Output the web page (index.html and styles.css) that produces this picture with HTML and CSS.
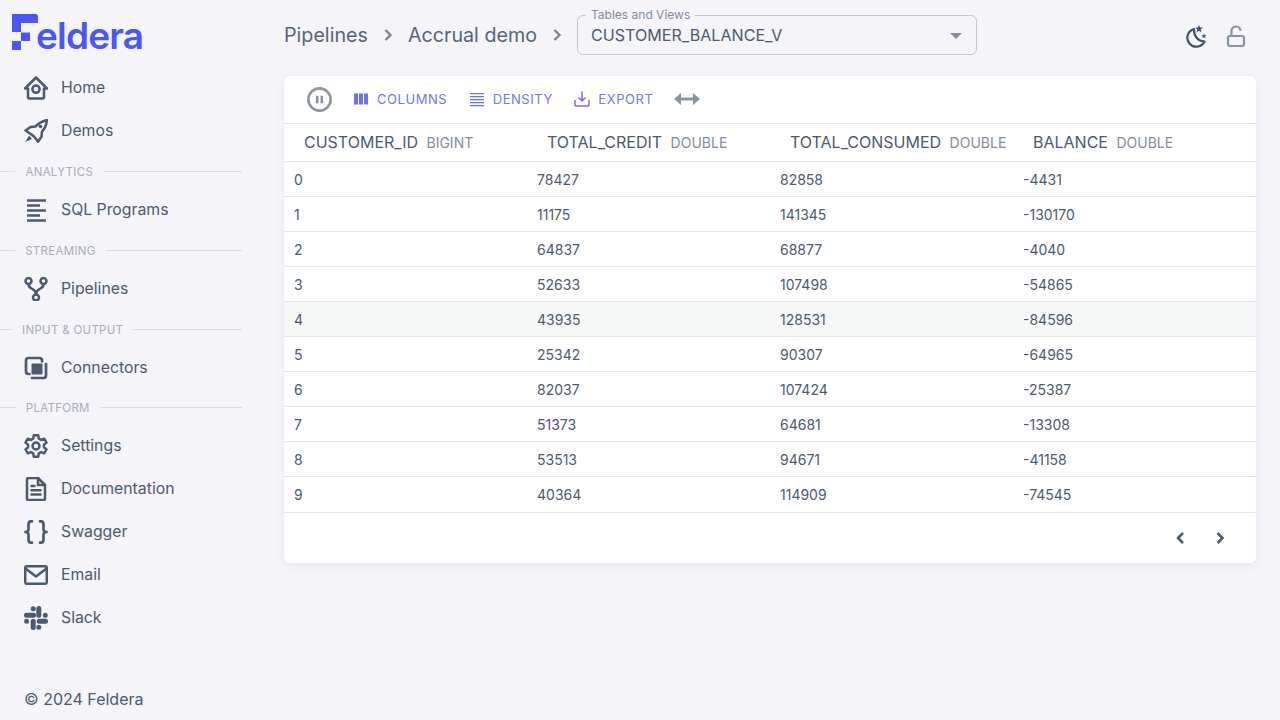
FILE: index.html
```html
<!DOCTYPE html>
<html lang="en">
<head>
  <meta charset="UTF-8" />
  <meta name="viewport" content="width=device-width, initial-scale=1.0" />
  <title>Feldera - Accrual demo</title>
  <link rel="stylesheet" href="styles.css">
</head>
<body>
  <!-- ========================== SIDEBAR ========================= -->
  <aside class="sidebar">
    <div class="logo">
      <svg class="logo-mark" width="26" height="36" viewBox="0 0 26 36"><path d="M0 0H23.500Q26 0 26 2.500V9H9V18H0ZM9 18.500H18V27H9ZM0 27H9V36H0Z" fill="#4a55fb"/></svg>
      <span class="logo-text">eldera</span>
    </div>
    <nav class="nav">
      <a class="nav-item">
        <svg class="nav-icon" viewBox="0 0 24 24"><path d="M1 12.500 12 1.500l11 11h-3v8.500a1.500 1.500 0 0 1-1.500 1.500h-13A1.500 1.500 0 0 1 4 21v-8.500Z"/><circle cx="12" cy="13.200" r="3.600"/></svg>
        Home
      </a>
      <a class="nav-item">
        <svg class="nav-icon" viewBox="0 0 24 24"><path d="M7.500 15.500 1.500 11.500l5-3.500 5-.5C15 4 18.500 2 23 1c-.5 4.500-2 8.500-5 11.700l-.5 5-3.500 5-3.800-5Z"/><circle cx="16.500" cy="7.500" r="1.800" class="fill"/><path d="M5 16.500 1.200 23l6.800-3Z" class="fill"/></svg>
        Demos
      </a>
      <div class="nav-section"><span>ANALYTICS</span></div>
      <a class="nav-item">
        <svg class="nav-icon" viewBox="0 0 24 24"><path class="wide" d="M3 2.500h19M3 7.500h13M3 12.500h19M3 17.500h13M3 22.500h19"/></svg>
        SQL Programs
      </a>
      <div class="nav-section"><span>STREAMING</span></div>
      <a class="nav-item">
        <svg class="nav-icon" viewBox="0 0 24 24"><circle cx="4.500" cy="4" r="3"/><circle cx="19.500" cy="4" r="3"/><circle cx="12" cy="20.500" r="3"/><path d="M4.500 7.500c0 5 7.500 3.500 7.500 9.500M19.500 7.500c0 5-7.500 3.500-7.500 9.500"/></svg>
        Pipelines
      </a>
      <div class="nav-section"><span>INPUT &amp; OUTPUT</span></div>
      <a class="nav-item">
        <svg class="nav-icon" viewBox="0 0 24 24"><path class="thick" d="M5.500 18H4.500A2.500 2.500 0 0 1 2 15.500v-11A2.500 2.500 0 0 1 4.500 2h11A2.500 2.500 0 0 1 18 4.500v1"/><path class="thick" d="M22 8v11.500a2.500 2.500 0 0 1-2.500 2.500H8"/><rect x="7.500" y="7.500" width="11" height="11" rx="1" class="fill"/></svg>
        Connectors
      </a>
      <div class="nav-section nav-section-last"><span>PLATFORM</span></div>
      <a class="nav-item">
        <svg class="nav-icon" viewBox="0 0 24 24"><path d="M9.800 1.300h4.400l.6 3.400 2.200 1.200 3.200-1.200 2.300 3.900-2.600 2.200v2.400l2.600 2.200-2.300 3.900-3.200-1.200-2.200 1.200-.6 3.400H9.800l-.6-3.400L7 18.100l-3.200 1.200-2.300-3.900 2.600-2.200v-2.400L1.500 8.600l2.300-3.900L7 5.900l2.200-1.200Z"/><circle cx="12" cy="12" r="3.500"/></svg>
        Settings
      </a>
      <a class="nav-item">
        <svg class="nav-icon" viewBox="0 0 24 24"><path d="M14 1H4.500A1.500 1.500 0 0 0 3 2.500v19A1.500 1.500 0 0 0 4.500 23h15a1.500 1.500 0 0 0 1.500-1.500V8Z"/><path d="M14 1v7h7M7.500 9h3M7.500 13.200h9M7.500 17.500h9"/></svg>
        Documentation
      </a>
      <a class="nav-item">
        <svg class="nav-icon" viewBox="0 0 24 24"><path class="thick" d="M8 1.300H7C5 1.300 4.500 3 4.500 4.500v4.500c0 2-1 3-3 3 2 0 3 1 3 3v4.500c0 1.500.5 3.200 2.500 3.200h1M16 1.300h1c2 0 2.500 1.700 2.500 3.200v4.500c0 2 1 3 3 3-2 0-3 1-3 3v4.500c0 1.500-.5 3.200-2.500 3.200h-1"/></svg>
        Swagger
      </a>
      <a class="nav-item">
        <svg class="nav-icon" viewBox="0 0 24 24"><rect x="1.200" y="3.200" width="21.600" height="17.600" rx="1.800"/><path d="m1.500 5.500 10.500 8 10.500-8"/></svg>
        Email
      </a>
      <a class="nav-item">
        <svg class="nav-icon" viewBox="0 0 24 24">
          <path class="slack" d="M2.500 9.200h7M14.800 2.500v6.700M15.200 15.200h6.300M9.200 15.200v6.300M21.300 9.200h.01M2.600 15.200h.01M9.200 2.700h.01M14.800 21.300h.01"/>
        </svg>
        Slack
      </a>
    </nav>
    <div class="copyright">© 2024 Feldera</div>
  </aside>

  <!-- ========================== MAIN ========================= -->
  <main class="main">
    <header class="topbar">
      <span class="crumb">Pipelines</span>
      <svg class="crumb-sep" viewBox="0 0 24 24"><path d="m9.500 7 5 5-5 5"/></svg>
      <span class="crumb">Accrual demo</span>
      <svg class="crumb-sep" viewBox="0 0 24 24"><path d="m9.500 7 5 5-5 5"/></svg>
      <div class="select">
        <span class="select-label">Tables and Views</span>
        <span class="select-value">CUSTOMER_BALANCE_V</span>
        <span class="select-caret"></span>
      </div>
      <div class="top-actions">
        <svg class="moon" viewBox="0 0 24 24"><path d="M10 5a9 9 0 1 0 10.500 12.500C14.500 17.500 9.500 12.500 10 5Z"/><path class="fill" d="m15 .5 1 2.900 3 .2-2.300 1.900.8 2.900-2.500-1.600-2.500 1.600.8-2.900-2.300-1.900 3-.2ZM20 9.500l.7 1.700 1.800.1-1.400 1.200.5 1.800-1.600-1-1.600 1 .5-1.800-1.400-1.200 1.800-.1Z"/></svg>
        <svg class="lock" viewBox="0 0 24 24"><rect x="4" y="12" width="16" height="10" rx="2"/><path d="M7.500 12V7a4.500 4.500 0 0 1 9 0"/></svg>
      </div>
    </header>

    <section class="card">
      <div class="toolbar">
        <svg class="pause" viewBox="0 0 24 24"><circle cx="12" cy="12" r="10.700"/><path d="M9.800 8.500v7M14.200 8.500v7"/></svg>
        <button class="tool-btn">
          <svg viewBox="0 0 18 18"><path d="M2 3.500h4v11H2ZM7 3.500h4v11H7ZM12 3.500h4v11h-4Z"/></svg>
          COLUMNS
        </button>
        <button class="tool-btn">
          <svg viewBox="0 0 18 18"><path d="M2 3h14v1.300H2ZM2 6h14v1.300H2ZM2 9h14v1.300H2ZM2 12h14v1.300H2ZM2 15h14v1.300H2Z"/></svg>
          DENSITY
        </button>
        <button class="tool-btn">
          <svg viewBox="0 0 18 18"><path class="line" d="M9 1.500v9M5.500 7.500 9 11l3.500-3.500M2 10v5a1 1 0 0 0 1 1h12a1 1 0 0 0 1-1v-5"/></svg>
          EXPORT
        </button>
        <svg class="resize" viewBox="0 0 26 14"><path d="M0 7 7 1v4.500h12V1l7 6-7 6V8.500H7V13Z"/></svg>
      </div>
      <table class="grid">
        <thead>
          <tr>
            <th>CUSTOMER_ID <small>BIGINT</small></th>
            <th>TOTAL_CREDIT <small>DOUBLE</small></th>
            <th>TOTAL_CONSUMED <small>DOUBLE</small></th>
            <th>BALANCE <small>DOUBLE</small></th>
          </tr>
        </thead>
        <tbody>
          <tr><td>0</td><td>78427</td><td>82858</td><td>-4431</td></tr>
          <tr><td>1</td><td>11175</td><td>141345</td><td>-130170</td></tr>
          <tr><td>2</td><td>64837</td><td>68877</td><td>-4040</td></tr>
          <tr><td>3</td><td>52633</td><td>107498</td><td>-54865</td></tr>
          <tr class="hover"><td>4</td><td>43935</td><td>128531</td><td>-84596</td></tr>
          <tr><td>5</td><td>25342</td><td>90307</td><td>-64965</td></tr>
          <tr><td>6</td><td>82037</td><td>107424</td><td>-25387</td></tr>
          <tr><td>7</td><td>51373</td><td>64681</td><td>-13308</td></tr>
          <tr><td>8</td><td>53513</td><td>94671</td><td>-41158</td></tr>
          <tr class="last"><td>9</td><td>40364</td><td>114909</td><td>-74545</td></tr>
        </tbody>
      </table>
      <div class="pager">
        <svg viewBox="0 0 24 24"><path d="M15 7 10 12l5 5"/></svg>
        <svg viewBox="0 0 24 24"><path d="m9.500 7 5 5-5 5"/></svg>
      </div>
    </section>
  </main>
</body>
</html>
```

FILE: styles.css
```css
/* --- Reset & base ---------------------------------------------------- */
* { box-sizing: border-box; margin: 0; padding: 0; }
html, body { height: 100%; }
body {
  display: flex;
  height: 720px;
  overflow: hidden;
  font-family: Inter, "Liberation Sans", sans-serif;
  color: #4c5a70;
  background: #f4f4f9;
}

/* --- Sidebar --------------------------------------------------------- */
.sidebar { width: 260px; flex: none; display: flex; flex-direction: column; }
.logo { display: flex; align-items: flex-end; height: 50px; padding: 14px 0 0 12px; }
.logo-mark { flex: none; display: block; }
.logo-text {
  margin: 0 0 -4px -2px;
  font-size: 37px;
  font-weight: 600;
  line-height: 36px;
  height: 36px;
  letter-spacing: -.8px;
  color: #4a55fb;
}
.nav { display: flex; flex-direction: column; padding-top: 16px; width: 242px; }
.nav-item {
  display: flex;
  align-items: center;
  gap: 13px;
  height: 43px;
  padding-left: 24px;
  font-size: 15.800px;
  color: #4c5a70;
}
.nav-icon { width: 24px; height: 24px; flex: none; fill: none; stroke: #4c5a70; stroke-width: 2.500; stroke-linejoin: round; stroke-linecap: round; }
.nav-icon .fill { fill: #4c5a70; stroke: none; }
.nav-icon .wide { stroke-width: 2.500; stroke-linecap: butt; }
.nav-icon .thick { stroke-width: 2.700; }
.nav-icon .slack { stroke-width: 5; }
.nav-section {
  display: flex;
  align-items: center;
  gap: 10px;
  height: 36px;
  padding-top: 2px;
  font-size: 11.500px;
  letter-spacing: .3px;
  color: #a8aeba;
}
.nav-section span { padding-top: 1px; }
.nav-section-last { height: 35px; padding-top: 1px; }
.nav-section::before, .nav-section::after { content: ""; height: 1px; background: #dcdde4; }
.nav-section::before { flex: 1; }
.nav-section::after { flex: 9; }
.copyright { margin-top: auto; padding: 0 0 10px 24px; font-size: 16px; line-height: 22px; }

/* --- Main ------------------------------------------------------------ */
.main { flex: 1; min-width: 0; padding: 0 24px; }
.topbar { display: flex; align-items: center; height: 76px; padding-bottom: 6px; }
.crumb { font-size: 19.700px; color: #56647a; }
.crumb-sep { width: 24px; height: 24px; margin: 0 8px; fill: none; stroke: #7d8695; stroke-width: 2.400; }
.select {
  position: relative;
  display: flex;
  align-items: center;
  width: 400px;
  height: 40px;
  padding-left: 13px;
  border: 1px solid #c4c6cf;
  border-radius: 6px;
}
.select-label {
  position: absolute;
  left: 8px;
  top: -8px;
  padding: 0 5px;
  font-size: 12px;
  line-height: 14px;
  color: #858d9c;
  background: #f4f4f9;
}
.select-value { font-size: 16.100px; color: #4c5a70; }
.select-caret {
  position: absolute;
  right: 14px;
  top: 17px;
  border: 6px solid transparent;
  border-top: 6px solid #858d9c;
  border-bottom: 0;
}
.top-actions { display: flex; align-items: center; gap: 16px; margin-left: auto; padding-right: 8px; margin-top: 2px; }
.moon { width: 24px; height: 24px; fill: none; stroke: #435268; stroke-width: 2.200; stroke-linejoin: round; }
.moon .fill { fill: #435268; stroke: none; }
.lock { width: 24px; height: 24px; fill: none; stroke: #8b94a3; stroke-width: 2.200; }

/* --- Card / data grid ------------------------------------------------ */
.card {
  background: #fff;
  border-radius: 6px;
  box-shadow: 0 2px 8px rgba(60,60,90,.08);
  overflow: hidden;
}
.toolbar { display: flex; align-items: center; height: 48px; padding-left: 23px; padding-bottom: 1px; border-bottom: 1px solid #e6e7ea; }
.pause { width: 25px; height: 25px; fill: none; stroke: #8b94a3; stroke-width: 2.500; margin-right: 20px; }
.tool-btn {
  display: flex;
  align-items: center;
  gap: 7px;
  margin-right: 20.500px;
  border: none;
  background: none;
  font: 400 13px Inter, "Liberation Sans", sans-serif;
  letter-spacing: .55px;
  color: #7076fb;
}
.tool-btn svg { width: 18px; height: 18px; fill: #6a70fb; }
.tool-btn svg .line { fill: none; stroke: #6a70fb; stroke-width: 1.500; }
.resize { width: 26px; height: 14px; fill: #8b94a3; }
.grid { width: 100%; table-layout: fixed; border-collapse: collapse; font-size: 14px; }
.grid th {
  height: 37px;
  padding-left: 20px;
  text-align: left;
  font-size: 16px;
  font-weight: 400;
  white-space: nowrap;
  color: #4c5a70;
  border-bottom: 1px solid #e6e7ea;
}
.grid th small { margin-left: 4px; font-size: 14px; color: #858d9c; }
.grid td { height: 35px; padding: 1px 0 0 10px; color: #4c5a70; border-bottom: 1px solid #e6e7ea; }
.grid tr.hover td { background: #f6f7f7; }
.grid tr.last td { height: 36px; padding-top: 0; }
.pager { display: flex; justify-content: flex-end; align-items: center; gap: 16px; height: 50px; padding-right: 24px; }
.pager svg { width: 24px; height: 24px; fill: none; stroke: #4c5a70; stroke-width: 2.600; }
```
